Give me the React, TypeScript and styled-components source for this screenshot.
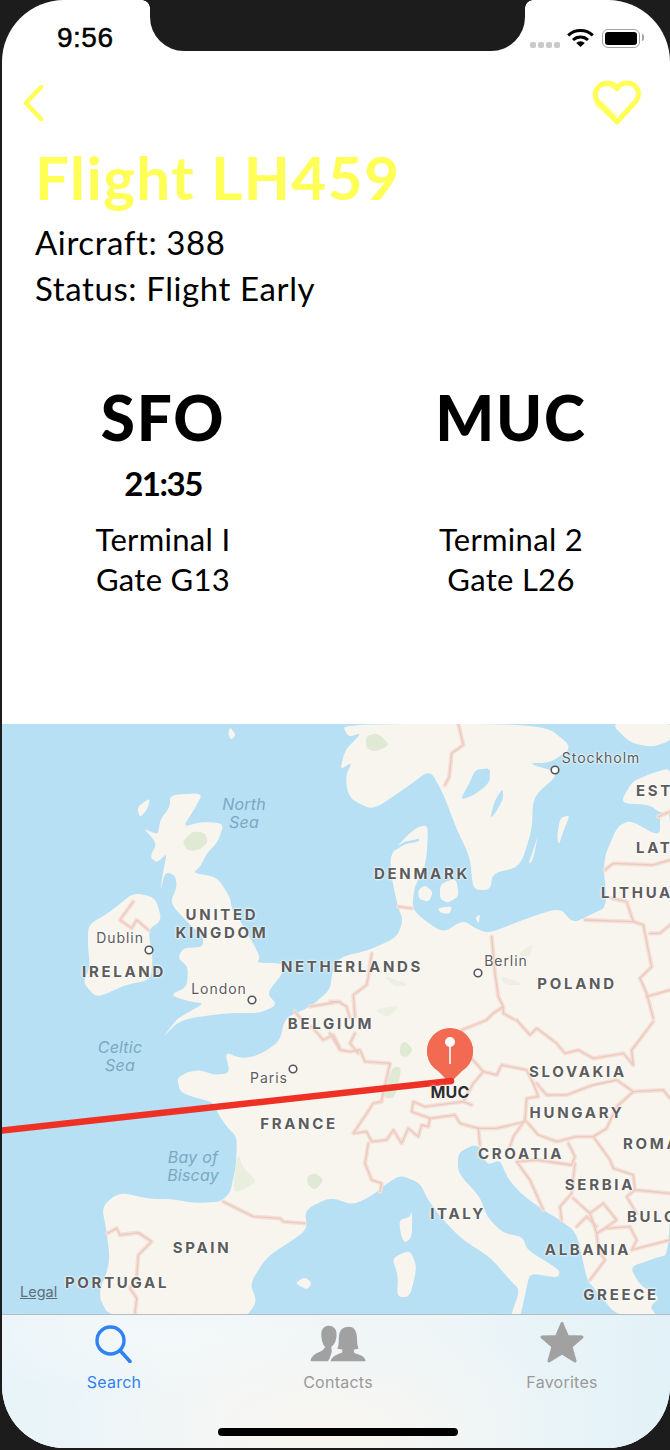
import React from 'react';
import styled, { createGlobalStyle } from 'styled-components';

const MAP_TOP = 724;
const SCREEN_LEFT = 2;
const YELLOW = '#ffff55';
const SEA = '#b7e0f4';
const LAND = '#f8f5ef';
const PARK = '#dfe9d3';

const GlobalStyle = createGlobalStyle`
  html, body {
    margin: 0;
    padding: 0;
    background: #1c1c1c;
  }
`;

const Page = styled.div`
  width: 670px;
  height: 1450px;
  padding: 0 0 2px 2px;
  box-sizing: border-box;
  overflow: hidden;
  background: #1c1c1c;
`;

const Screen = styled.div`
  position: relative;
  width: 668px;
  height: 1448px;
  display: flex;
  flex-direction: column;
  overflow: hidden;
  background: #fff;
  border-radius: 62px;
  font-family: 'Lato', 'Noto Sans', sans-serif;
  color: #000;
`;

const Notch = styled.div`
  position: absolute;
  top: 0;
  left: 148px;
  width: 375px;
  height: 51px;
  background: #1c1c1c;
  border-radius: 0 0 34px 34px;

  &::before,
  &::after {
    content: '';
    position: absolute;
    top: 0;
    width: 8px;
    height: 8px;
  }
  &::before {
    left: -8px;
    background: radial-gradient(circle at 0 100%, transparent 7.5px, #1c1c1c 8px);
  }
  &::after {
    right: -8px;
    background: radial-gradient(circle at 100% 100%, transparent 7.5px, #1c1c1c 8px);
  }
`;

const StatusBar = styled.div`
  height: 76px;
  flex: none;
  display: flex;
  align-items: center;
  justify-content: space-between;
  padding: 0 30px 0 55px;
`;

const Clock = styled.span`
  font-family: 'Liberation Sans', sans-serif;
  font-size: 28px;
  font-weight: 400;
  letter-spacing: 0.5px;
  -webkit-text-stroke: 0.5px #000;
`;

const StatusIcons = styled.div`
  display: flex;
  align-items: center;
`;

const SignalDots = styled.div`
  display: flex;
  gap: 2px;
  margin: 13px 7px 0 0;
`;

const SignalDot = styled.i`
  width: 6px;
  height: 6px;
  border-radius: 2px;
  background: #c9c9c9;
`;

const Battery = styled.div`
  position: relative;
  width: 38px;
  height: 19px;
  margin-left: 8px;
  box-sizing: border-box;
  padding: 2px;
  border: 1.5px solid #a3a3a3;
  border-radius: 6px;

  &::before {
    content: '';
    display: block;
    height: 100%;
    background: #000;
    border-radius: 3px;
  }
  &::after {
    content: '';
    position: absolute;
    top: 4px;
    right: -5px;
    width: 2px;
    height: 7px;
    background: #a3a3a3;
    border-radius: 0 2px 2px 0;
  }
`;

const NavRow = styled.div`
  height: 54px;
  flex: none;
  display: flex;
  align-items: center;
  justify-content: space-between;
  padding: 0 28px 0 19px;
`;

const FlightInfo = styled.div`
  padding-left: 33px;
`;

const FlightTitle = styled.h1`
  margin: 12px 0 7px;
  font-size: 60px;
  font-weight: 700;
  line-height: 70px;
  letter-spacing: 1.5px;
  color: ${YELLOW};
`;

const InfoLine = styled.div`
  font-size: 33px;
  line-height: 46px;
  letter-spacing: 0.6px;
`;

const Route = styled.div`
  display: flex;
  gap: 48px;
  margin: 70px 0 0 11px;
`;

const Airport = styled.div`
  width: 300px;
  display: flex;
  flex-direction: column;
  align-items: center;
`;

const AirportCode = styled.div`
  margin-bottom: 5px;
  font-size: 62px;
  font-weight: 900;
  line-height: 72px;
  letter-spacing: 1.8px;
`;

const DepartureTime = styled.div`
  height: 50px;
  margin-bottom: 11px;
  font-size: 33px;
  font-weight: 700;
  line-height: 50px;
  letter-spacing: -1.5px;
`;

const GateLine = styled.div`
  font-size: 31px;
  line-height: 40px;
  letter-spacing: 0.3px;
`;

const MapPanel = styled.div`
  position: relative;
  height: 590px;
  margin-top: auto;
  flex: none;
  overflow: hidden;
  background: ${SEA};
`;

const MapArt = styled.svg`
  display: block;
  width: 668px;
  height: 590px;
  filter: blur(0.35px);
`;

type LabelKind = 'country' | 'city' | 'sea' | 'pin';

const MapLabel = styled.span<{ $kind: LabelKind; $x: number; $y: number; $start?: boolean }>`
  position: absolute;
  left: ${(p) => p.$x - SCREEN_LEFT}px;
  top: ${(p) => p.$y - MAP_TOP}px;
  transform: translate(${(p) => (p.$start ? '0' : '-50%')}, -50%);
  white-space: pre;
  text-align: center;
  font-family: 'Inter', 'Liberation Sans', sans-serif;
  font-size: ${(p) => (p.$kind === 'country' ? 15 : p.$kind === 'sea' ? 16 : p.$kind === 'pin' ? 16 : 14)}px;
  font-weight: ${(p) => (p.$kind === 'country' ? 700 : p.$kind === 'pin' ? 700 : 400)};
  font-style: ${(p) => (p.$kind === 'sea' ? 'italic' : 'normal')};
  line-height: 18px;
  letter-spacing: ${(p) => (p.$kind === 'country' ? 2.7 : p.$kind === 'city' ? 0.95 : 0.2)}px;
  color: ${(p) => (p.$kind === 'sea' ? '#7ba8c2' : p.$kind === 'pin' ? '#2e2e2e' : '#5c5c5c')};
  text-shadow: ${(p) => (p.$kind === 'sea' ? 'none' : '0 0 2px #fff, 0 0 3px #fff')};
`;

const LegalLink = styled.span`
  position: absolute;
  left: 18px;
  top: 559px;
  font-family: 'Inter', 'Liberation Sans', sans-serif;
  font-size: 14.5px;
  line-height: 18px;
  color: #5f6f78;
  text-decoration: underline;
`;

const TabBar = styled.div`
  position: relative;
  height: 134px;
  flex: none;
  box-sizing: border-box;
  display: grid;
  grid-template-columns: repeat(3, 224px);
  border-top: 1px solid #b3bdc2;
  background:
    radial-gradient(ellipse 260px 120px at 48% 85%, #f8f6f2 0%, rgba(248, 246, 242, 0) 100%),
    radial-gradient(ellipse 200px 60px at 22% 15%, #f3f8f9 0%, rgba(243, 248, 249, 0) 100%),
    linear-gradient(90deg, #e8f4f9 0%, #f0f6f8 35%, #edf5f7 65%, #e3f2f8 100%);
`;

const Tab = styled.div<{ $active?: boolean }>`
  height: 77px;
  display: flex;
  flex-direction: column;
  align-items: center;
  justify-content: flex-end;
  gap: 9px;
  font-family: 'Inter', 'Liberation Sans', sans-serif;
  font-size: 16px;
  line-height: 20px;
  letter-spacing: 0.25px;
  color: ${(p) => (p.$active ? '#2e82f6' : '#9a9a9a')};
`;

const HomeIndicator = styled.div`
  position: absolute;
  left: 216px;
  bottom: 12px;
  width: 240px;
  height: 8px;
  border-radius: 4px;
  background: #000;
`;

// rounds the corners of a closed outline so coasts don't look cut with scissors
const softOutline = (points: string) => {
  const pts = points
    .trim()
    .split(/\s+/)
    .map((p) => p.split(',').map(Number));
  const k = 0.34;
  return (
    pts
      .map((p, i) => {
        const a = pts[(i + pts.length - 1) % pts.length];
        const b = pts[(i + 1) % pts.length];
        const sx = p[0] + (a[0] - p[0]) * k;
        const sy = p[1] + (a[1] - p[1]) * k;
        const ex = p[0] + (b[0] - p[0]) * k;
        const ey = p[1] + (b[1] - p[1]) * k;
        return `${i === 0 ? 'M' : 'L'}${sx},${sy} Q${p[0]},${p[1]} ${ex},${ey}`;
      })
      .join(' ') + ' Z'
  );
};

const landShapes = [
  // continent
  '102,1208 112,1197 123,1193 150,1199 170,1199 195,1203 220,1202 230,1193 233,1180 236,1165 237,1137 228,1128 220,1117 213,1102 196,1098 180,1092 177,1078 188,1072 200,1070 215,1075 230,1073 225,1052 240,1058 253,1057 268,1050 280,1040 285,1018 310,1007 330,990 332,973 340,957 370,950 397,937 403,920 398,907 392,880 390,857 398,845 410,833 418,827 428,825 427,853 424,870 415,885 412,907 420,917 443,933 463,920 478,930 490,933 530,917 560,908 573,923 590,915 607,907 603,860 617,827 630,820 660,837 660,813 672,810 672,1253 650,1260 630,1267 640,1285 660,1297 650,1307 657,1316 617,1316 593,1287 587,1280 577,1233 560,1220 543,1210 520,1193 507,1177 500,1160 487,1165 480,1147 473,1145 458,1153 458,1173 480,1197 487,1217 503,1233 523,1237 527,1250 560,1270 558,1278 530,1273 526,1290 520,1318 510,1318 520,1290 510,1280 490,1257 463,1240 443,1220 428,1200 420,1183 400,1175 385,1185 373,1195 353,1205 330,1197 305,1210 307,1230 285,1245 267,1257 250,1283 257,1302 245,1318 110,1318 98,1295 110,1263 107,1233',
  // great britain
  '170,795 203,793 195,808 183,827 200,822 224,823 218,842 207,853 200,867 193,873 217,877 230,897 232,910 240,920 245,930 253,943 260,957 257,963 282,963 283,973 267,993 277,1005 260,1013 230,1013 213,1015 190,1018 177,1023 163,1037 170,1028 178,1018 205,1003 190,1002 170,995 187,987 188,967 178,958 183,948 203,947 203,935 190,925 170,903 177,887 175,875 165,872 160,893 163,872 167,853 157,863 150,857 157,843 143,828 158,835 160,820 170,807',
  // ireland
  '88,925 110,912 133,893 155,897 162,920 148,930 153,960 150,980 125,985 97,998 83,983 90,967 88,947',
  // hebrides and shetland
  '137,807 150,798 148,808 140,818',
  '230,727 236,735 231,740 228,734',
  // scandinavia
  '342,724 543,724 573,747 550,763 527,763 560,773 533,797 532,830 520,867 493,873 490,890 473,890 470,857 457,830 443,793 430,770 407,787 373,810 352,800 347,790 346,775 352,762 340,770 345,750 362,733 348,737',
  // finland and estonia
  '610,722 672,722 672,740 653,747 630,743',
  '672,767 647,775 632,782 620,803 650,805 660,813 672,810',
  // danish islands
  '418,890 425,885 433,892 429,902 419,899',
  '440,884 456,878 459,896 448,903 440,899',
  '438,908 452,906 450,914 440,913',
  '475,918 480,914 479,924',
  // baltic islands
  '557,837 560,818 570,815 563,832 559,845',
  '528,865 535,845 538,835 533,860',
  // mediterranean islands
  '399,1220 410,1217 412,1210 412,1237 405,1243 401,1236',
  '392,1258 410,1250 417,1267 410,1297 397,1297 398,1275',
  '295,1283 305,1277 312,1283 307,1290',
];

const lakeShapes = ['460,800 470,782 475,770 490,768 490,782 475,795', '490,818 495,800 503,788 503,800 494,815'];

const parkShapes = [
  { points: '182,842 193,831 205,833 208,842 200,850 188,851', fade: 1 },
  { points: '366,736 378,733 390,745 375,752 366,748', fade: 1 },
  { points: '400,1045 405,1041 413,1049 408,1057 400,1056', fade: 1 },
  { points: '392,1067 402,1067 395,1098 383,1098', fade: 1 },
  { points: '238,1152 243,1168 258,1182 232,1195', fade: 0.6 },
  { points: '307,1176 316,1173 324,1180 316,1190 308,1186', fade: 1 },
  { points: '500,975 525,985 505,985', fade: 0.5 },
  { points: '517,955 533,943 530,957', fade: 0.5 },
  { points: '383,975 410,985 395,987', fade: 0.5 },
  { points: '373,1010 400,1005 388,1018', fade: 0.5 },
];

const Coast: React.FC = () => (
  <g>
    {landShapes.map((points) => (
      <path key={points} d={softOutline(points)} fill={LAND} />
    ))}
    {lakeShapes.map((points) => (
      <path key={points} d={softOutline(points)} fill={SEA} />
    ))}
    <path d="M393,850 L405,843 L419,840" fill="none" stroke={SEA} strokeWidth="2.5" />
    {parkShapes.map((park) => (
      <path key={park.points} d={softOutline(park.points)} fill={PARK} opacity={park.fade} />
    ))}
  </g>
);

const Borders: React.FC<{ color: string; weight: number }> = ({ color, weight }) => (
  <g fill="none" stroke={color} strokeWidth={weight} strokeLinejoin="round" strokeLinecap="round">
    <g transform="translate(0 720) scale(0.3333)">
      <path d="M400,545 L360,600 L395,625 L410,600 L445,630" />
      <path d="M930,860 L1020,845" />
      <path d="M885,875 L905,900" />
    </g>
    <g transform="translate(330 720) scale(0.3333)">
      <path d="M385,12 L400,75 L365,100 L358,170 L345,195" />
      <path d="M205,560 L245,565" />
      <path d="M125,700 L115,770 L110,795 L70,825 L75,890" />
      <path d="M0,845 L25,845 L50,860 L60,895" />
      <path d="M485,650 L495,760 L505,830 L520,860 L490,880 L470,900" />
      <path d="M520,860 L520,880 L555,900" />
      <path d="M825,450 L850,430 L970,435 L1020,420" />
      <path d="M765,600 L910,605 L940,615 L965,740 L930,775 L950,820 L970,895" />
      <path d="M845,535 L890,545 L910,605" />
      <path d="M960,640 L990,640 L1020,615" />
      <path d="M950,830 L1020,810" />
      <path d="M985,290 L1020,275" />
    </g>
    <g transform="translate(0 1020) scale(0.3333)">
      <path d="M670,545 L760,590 L840,595 L850,605 L915,610" />
      <path d="M322,640 L350,625 L360,645 L415,638 L455,665 L415,705 L410,770 L390,805 L410,835 L405,880" />
      <path d="M935,20 L970,60 L1000,45 L1020,85" />
    </g>
    <g transform="translate(330 1020) scale(0.3333)">
      <path d="M0,40 L30,90 L60,95 L90,90 L105,125 L180,130 L155,240" />
      <path d="M75,40 L60,70 L85,100" />
      <path d="M155,245 L130,250 L70,340 L110,335 L125,365 L170,360 L190,330 L215,370 L235,325 L265,350 L275,315 L295,320 L300,295 L245,275 L250,245 L285,260 L400,245 L425,255" />
      <path d="M115,370 L105,430 L125,480 L155,490 L150,515" />
      <path d="M300,295 L375,285 L390,310 L445,325 L500,325 L585,305" />
      <path d="M445,325 L450,375" />
      <path d="M585,300 L550,350 L540,380" />
      <path d="M400,245 L430,190 L460,155 L500,165 L515,135 L590,150 L610,190 L625,230 L590,235 L585,300" />
      <path d="M460,155 L420,110 L395,30 L470,0" />
      <path d="M560,0 L600,45 L620,25 L680,70 L705,100 L745,90 L790,115 L880,100 L910,135 L905,90 L970,5" />
      <path d="M620,190 L650,225 L710,225 L790,195 L860,180 L910,215 L1000,210 L1020,235" />
      <path d="M910,215 L860,260 L830,325 L790,350 L740,350 L680,365 L625,345 L590,305" />
      <path d="M790,350 L840,420 L850,445 L910,465 L915,510 L1020,520" />
      <path d="M915,510 L890,530 L920,580" />
      <path d="M560,425 L600,480 L640,570" />
      <path d="M560,425 L620,420 L725,435 L735,410 L715,370" />
      <path d="M735,430 L725,520 L690,560 L695,600" />
      <path d="M730,535 L780,580 L800,640 L825,625 L900,620 L920,660 L905,690 L1020,660" />
      <path d="M800,640 L805,690 L825,720 L780,780" />
      <path d="M740,620 L770,590 L800,620" />
      <path d="M780,580 L820,550 L860,600 L825,625" />
    </g>
  </g>
);

const cityDots = [
  [149, 950],
  [252, 1000],
  [293, 1069],
  [555, 770],
  [478, 973],
];

type MapText = { text: string; kind: LabelKind; x: number; y: number; start?: boolean };

const mapTexts: MapText[] = [
  { text: 'North\nSea', kind: 'sea', x: 244, y: 813 },
  { text: 'Celtic\nSea', kind: 'sea', x: 120, y: 1056 },
  { text: 'Bay of\nBiscay', kind: 'sea', x: 193, y: 1166 },
  { text: 'UNITED\nKINGDOM', kind: 'country', x: 222, y: 924 },
  { text: 'IRELAND', kind: 'country', x: 124, y: 972 },
  { text: 'NETHERLANDS', kind: 'country', x: 352, y: 967 },
  { text: 'BELGIUM', kind: 'country', x: 331, y: 1024 },
  { text: 'FRANCE', kind: 'country', x: 299, y: 1124 },
  { text: 'SPAIN', kind: 'country', x: 202, y: 1248 },
  { text: 'PORTUGAL', kind: 'country', x: 117, y: 1283 },
  { text: 'DENMARK', kind: 'country', x: 422, y: 874 },
  { text: 'POLAND', kind: 'country', x: 577, y: 984 },
  { text: 'SLOVAKIA', kind: 'country', x: 578, y: 1072 },
  { text: 'HUNGARY', kind: 'country', x: 577, y: 1113 },
  { text: 'CROATIA', kind: 'country', x: 521, y: 1154 },
  { text: 'SERBIA', kind: 'country', x: 600, y: 1185 },
  { text: 'ITALY', kind: 'country', x: 458, y: 1214 },
  { text: 'ALBANIA', kind: 'country', x: 588, y: 1250 },
  { text: 'GREECE', kind: 'country', x: 621, y: 1295 },
  { text: 'ESTONIA', kind: 'country', x: 636, y: 791, start: true },
  { text: 'LATVIA', kind: 'country', x: 636, y: 848, start: true },
  { text: 'LITHUANIA', kind: 'country', x: 601, y: 893, start: true },
  { text: 'ROMANIA', kind: 'country', x: 623, y: 1144, start: true },
  { text: 'BULGARIA', kind: 'country', x: 627, y: 1217, start: true },
  { text: 'Dublin', kind: 'city', x: 120, y: 938 },
  { text: 'London', kind: 'city', x: 219, y: 989 },
  { text: 'Paris', kind: 'city', x: 269, y: 1078 },
  { text: 'Stockholm', kind: 'city', x: 601, y: 758 },
  { text: 'Berlin', kind: 'city', x: 506, y: 961 },
  { text: 'MUC', kind: 'pin', x: 450, y: 1092 },
];

const WifiIcon = () => (
  <svg width="27" height="18" viewBox="0 0 27 18">
    <g fill="none" stroke="#000" strokeWidth="3">
      <path d="M1.2,6.4 A18,18 0 0 1 25.8,6.4" />
      <path d="M6,11 A11,11 0 0 1 21,11" />
    </g>
    <path d="M9.2,14 A6.5,6.5 0 0 1 17.8,14 L13.5,18 Z" fill="#000" />
  </svg>
);

const BackIcon = () => (
  <svg width="24" height="36" viewBox="0 0 24 36">
    <path d="M20,2 L5,18 L20,34" fill="none" stroke={YELLOW} strokeWidth="4.5" strokeLinecap="round" strokeLinejoin="round" />
  </svg>
);

const HeartIcon = () => (
  <svg width="50" height="46" viewBox="0 0 50 46">
    <g fill="none" stroke={YELLOW} strokeLinejoin="round" strokeLinecap="round">
      <path d="M25,42 L6,22 C-1,12 7,3 16,3 C20,3 23,5 25,9 C27,5 31,3 35,3 C44,3 50,12 44,21 Z" strokeWidth="5" />
      <path d="M23,40 L5,26 C0,15 3,6 12,2 M9,22 L24,36 M7,8 C12,4 17,5 21,8" strokeWidth="2.5" opacity="0.5" />
    </g>
  </svg>
);

const SearchIcon = () => (
  <svg width="38" height="38" viewBox="0 0 38 38">
    <circle cx="15.5" cy="15.5" r="13.5" fill="none" stroke="#2e82f6" strokeWidth="3.4" />
    <path d="M25.5,26 L35,36.5" fill="none" stroke="#2e82f6" strokeWidth="3.6" strokeLinecap="round" />
  </svg>
);

const ContactsIcon = () => (
  <svg width="58" height="38" viewBox="55 33 175 115">
    <path d="M92,60 C92,42 103,35 115,35 C128,35 140,45 138,65 C137,85 128,95 122,100 L124,113 C120,125 118,135 112,143 L60,143 C60,125 75,120 95,110 L104,100 C96,92 92,75 92,60 Z" fill="#a1a1a1" />
    <path d="M145,75 C145,50 155,38 175,38 C192,38 200,52 200,75 C200,90 203,100 205,104 L190,108 L192,118 C210,124 225,128 226,143 L120,143 C122,128 140,122 155,116 L156,108 L140,104 C144,98 145,90 145,75 Z" fill="#a1a1a1" stroke="#eef5f8" strokeWidth="5" paintOrder="stroke" />
  </svg>
);

const StarIcon = () => (
  <svg width="46" height="42" viewBox="0 0 46 42">
    <path d="M23,2.5 L28.5,15.5 L43,16 L32,25.5 L36,40 L23,32 L10,40 L14,25.5 L3,16 L17.5,15.5 Z" fill="#a1a1a1" stroke="#a1a1a1" strokeWidth="3" strokeLinejoin="round" />
  </svg>
);

const App: React.FC = () => (
  <Page>
    <GlobalStyle />
    <Screen>
      <Notch />
      <StatusBar>
        <Clock>9:56</Clock>
        <StatusIcons>
          <SignalDots>
            <SignalDot />
            <SignalDot />
            <SignalDot />
            <SignalDot />
          </SignalDots>
          <WifiIcon />
          <Battery />
        </StatusIcons>
      </StatusBar>
      <NavRow>
        <BackIcon />
        <HeartIcon />
      </NavRow>
      <FlightInfo>
        <FlightTitle>Flight LH459</FlightTitle>
        <InfoLine>Aircraft: 388</InfoLine>
        <InfoLine>Status: Flight Early</InfoLine>
      </FlightInfo>
      <Route>
        <Airport>
          <AirportCode>SFO</AirportCode>
          <DepartureTime>21:35</DepartureTime>
          <GateLine>Terminal I</GateLine>
          <GateLine>Gate G13</GateLine>
        </Airport>
        <Airport>
          <AirportCode>MUC</AirportCode>
          <DepartureTime />
          <GateLine>Terminal 2</GateLine>
          <GateLine>Gate L26</GateLine>
        </Airport>
      </Route>
      <MapPanel>
        <MapArt viewBox={`${SCREEN_LEFT} ${MAP_TOP} 668 590`}>
          <Coast />
          <Borders color="#f5e0d8" weight={13} />
          <Borders color="#ecc9bd" weight={4} />
          {cityDots.map(([cx, cy]) => (
            <circle key={cx} cx={cx} cy={cy} r="3.8" fill="#fff" stroke="#555" strokeWidth="1.6" />
          ))}
          <path d="M450,1083 L438,1071 A23,23 0 1 1 462,1071 Z" fill="#f26a52" />
          <circle cx="450" cy="1051" r="23" fill="#f26a52" />
          <path d="M450,1042 L450,1064" stroke="#fff" strokeWidth="1.6" />
          <circle cx="450" cy="1042" r="5" fill="#fff" />
          <path d="M2,1130.5 L451,1081" stroke="#ee3124" strokeWidth="6.5" strokeLinecap="round" />
        </MapArt>
        {mapTexts.map((t) => (
          <MapLabel key={t.text} $kind={t.kind} $x={t.x} $y={t.y} $start={t.start}>
            {t.text}
          </MapLabel>
        ))}
        <LegalLink>Legal</LegalLink>
      </MapPanel>
      <TabBar>
        <Tab $active>
          <SearchIcon />
          Search
        </Tab>
        <Tab>
          <ContactsIcon />
          Contacts
        </Tab>
        <Tab>
          <StarIcon />
          Favorites
        </Tab>
        <HomeIndicator />
      </TabBar>
    </Screen>
  </Page>
);

export default App;
